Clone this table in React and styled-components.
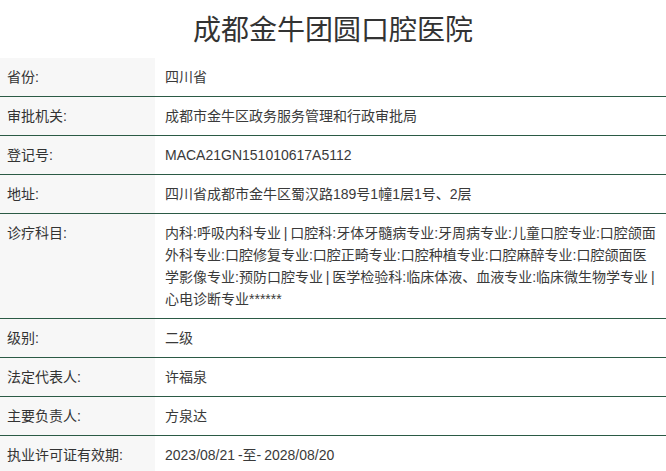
import React from "react";
import styled, { createGlobalStyle } from "styled-components";

const GlobalStyle = createGlobalStyle`
  body {
    margin: 0;
    background: #fff;
    font-family: "Liberation Sans", "Noto Sans CJK SC", sans-serif;
    color: #333;
  }
`;

const rows = [
  { label: "省份:", value: "四川省" },
  { label: "审批机关:", value: "成都市金牛区政务服务管理和行政审批局" },
  { label: "登记号:", value: "MACA21GN151010617A5112" },
  { label: "地址:", value: "四川省成都市金牛区蜀汉路189号1幢1层1号、2层" },
  {
    label: "诊疗科目:",
    value:
      "内科:呼吸内科专业 | 口腔科:牙体牙髓病专业:牙周病专业:儿童口腔专业:口腔颌面外科专业:口腔修复专业:口腔正畸专业:口腔种植专业:口腔麻醉专业:口腔颌面医学影像专业:预防口腔专业 | 医学检验科:临床体液、血液专业:临床微生物学专业 | 心电诊断专业******"
  },
  { label: "级别:", value: "二级" },
  { label: "法定代表人:", value: "许福泉" },
  { label: "主要负责人:", value: "方泉达" },
  { label: "执业许可证有效期:", value: "2023/08/21 -至- 2028/08/20" }
];

const App = () => (
  <Page>
    <GlobalStyle />
    <Title>成都金牛团圆口腔医院</Title>
    <InfoTable>
      {rows.map(({ label, value }, i) => (
        <Row key={i} first={i === 0}>
          <Label>{label}</Label>
          <Value>{value}</Value>
        </Row>
      ))}
    </InfoTable>
  </Page>
);

export default App;

const Page = styled.div`
  width: 666px;
`;

const Title = styled.h1`
  margin: 0;
  height: 58px;
  display: flex;
  align-items: center;
  justify-content: center;
  font-family: "Noto Sans CJK SC", sans-serif;
  font-size: 28px;
  font-weight: 400;
  color: #333;
  padding-bottom: 2px;
  box-sizing: border-box;
`;

const InfoTable = styled.div`
  display: flex;
  flex-direction: column;
`;

const Row = styled.div`
  display: grid;
  grid-template-columns: 155px 1fr;
  border-top: ${props => (props.first ? "none" : "1px solid #2b5a45")};
  font-size: 14px;
  line-height: 22px;
`;

const Label = styled.div`
  background: #f7f7f7;
  padding: 8px 0 8px 7px;
  color: #333;
`;

const Value = styled.div`
  padding: 8px 8px 8px 10px;
  color: #3a3a3a;
  word-break: break-all;
  word-spacing: -1px;
`;
